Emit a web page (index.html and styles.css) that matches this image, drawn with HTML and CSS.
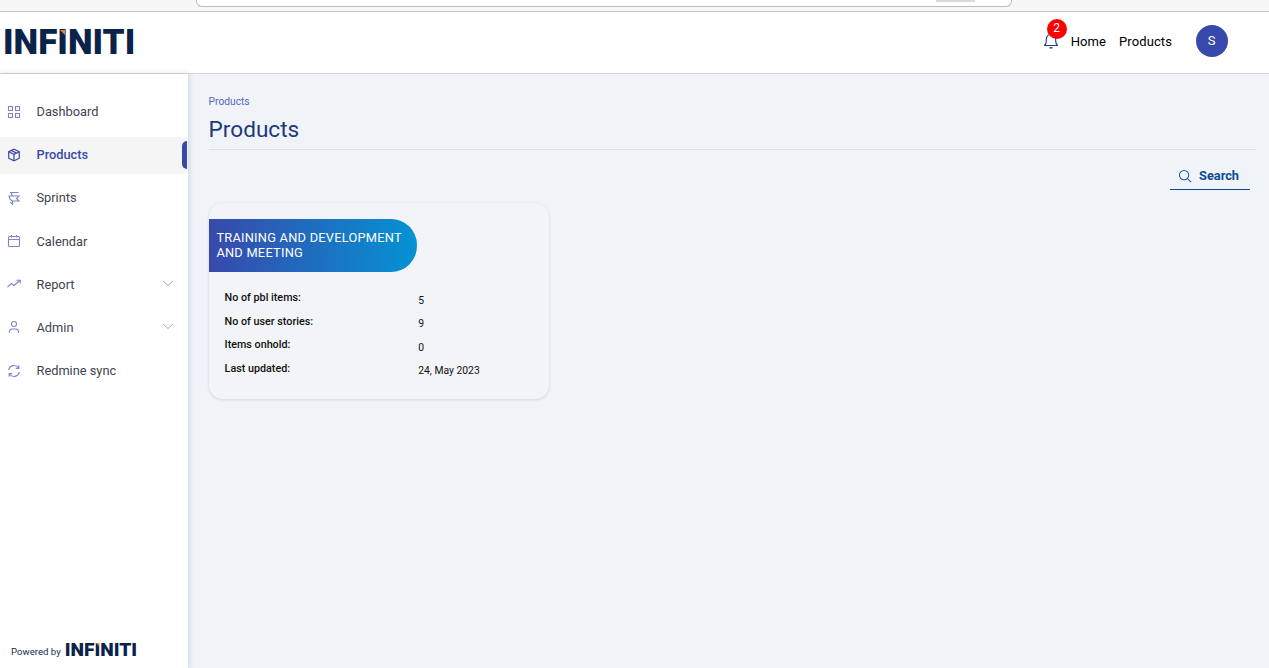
FILE: index.html
```html
<!DOCTYPE html>
<html lang="en">
<head>
<meta charset="utf-8">
<title>Products</title>
<link rel="stylesheet" href="styles.css">
</head>
<body>
<div class="chrome">
  <div class="urlbar"><span class="urlchip"></span></div>
</div>
<header class="topbar">
  <div class="logo"><span>INF</span><span class="logo-i">I</span><span>NITI</span></div>
  <nav class="topnav">
    <span class="bell">
      <svg width="14" height="16" viewBox="0 0 14 16" fill="none" stroke="#1e3a8a" stroke-width="1.1"><path d="M.5 12.500h13c-1.300-1.200-1.800-2.400-1.800-4.300V6a4.700 4.700 0 0 0-9.400 0v2.200c0 1.900-.5 3.100-1.800 4.300z"/><path d="M5.500 14.800h3" stroke-width="1.400"/></svg>
      <span class="badge">2</span>
    </span>
    <a class="toplink toplink-home">Home</a>
    <a class="toplink toplink-products">Products</a>
    <span class="avatar">S</span>
  </nav>
</header>
<div class="shell">
  <aside class="sidebar">
    <ul class="menu">
      <li class="item">
        <svg class="ico" viewBox="0 0 14 14" fill="none" stroke="#7f86c6" stroke-width="1.100"><rect x="1.500" y="1.500" width="4" height="4"/><rect x="8.500" y="1.500" width="4" height="4"/><rect x="1.500" y="8.500" width="4" height="4"/><rect x="8.500" y="8.500" width="4" height="4"/></svg>
        <span>Dashboard</span>
      </li>
      <li class="item active">
        <svg class="ico" viewBox="0 0 14 14" fill="none" stroke="#3949ab" stroke-width="1.200"><path d="M7 1.200l5.300 2.500v6.500L7 12.800l-5.300-2.600V3.700z"/><path d="M1.700 3.700L7 6.400l5.300-2.700M7 6.400v6.400M4.300 2.500l5.400 2.600"/></svg>
        <span>Products</span>
      </li>
      <li class="item">
        <svg class="ico" viewBox="0 0 14 14" fill="none" stroke="#7f86c6" stroke-width="1.100"><path d="M3 1.500h8.500M4 1.500l1.500 3.500H12L9.500 7.500l2.500 2.500H5L3 8 2 5h3.500M5.500 10v3.300L3 10.800"/></svg>
        <span>Sprints</span>
      </li>
      <li class="item">
        <svg class="ico" viewBox="0 0 14 14" fill="none" stroke="#7f86c6" stroke-width="1.100"><rect x="1.500" y="2.500" width="11" height="10" rx="1"/><path d="M1.500 5.500h11M4.500 1v2.500M9.500 1v2.500"/></svg>
        <span>Calendar</span>
      </li>
      <li class="item">
        <svg class="ico" viewBox="0 0 14 14" fill="none" stroke="#7f86c6" stroke-width="1.100"><path d="M0.500 10l4-3.500 2.500 2L13 3.500M9.500 3.200H13.200V6.500"/></svg>
        <span>Report</span>
        <svg class="chev" viewBox="0 0 12 7" fill="none" stroke="#a9adb8"><path d="M1 1l5 4.500L11 1"/></svg>
      </li>
      <li class="item">
        <svg class="ico" viewBox="0 0 14 14" fill="none" stroke="#7f86c6" stroke-width="1.100"><circle cx="7" cy="4" r="2.500"/><path d="M2.500 13v-1.500c0-1.500 1.300-2.500 2.500-2.500h4c1.200 0 2.500 1 2.500 2.500V13"/></svg>
        <span>Admin</span>
        <svg class="chev" viewBox="0 0 12 7" fill="none" stroke="#a9adb8"><path d="M1 1l5 4.500L11 1"/></svg>
      </li>
      <li class="item">
        <svg class="ico" viewBox="0 0 14 14" fill="none" stroke="#7f86c6" stroke-width="1.200"><path d="M1.800 6A5.300 5.300 0 0 1 11.500 4M12.200 8a5.300 5.300 0 0 1-9.700 2"/><path d="M11.800 1.200V4.300H8.700M2.200 12.800V9.700h3.100"/></svg>
        <span>Redmine sync</span>
      </li>
    </ul>
    <div class="powered">
      <span class="powered-text">Powered by</span>
      <span class="logo logo-small"><span>INF</span><span class="logo-i">I</span><span>NITI</span></span>
    </div>
  </aside>
  <main class="content">
    <div class="crumb">Products</div>
    <h1 class="title">Products</h1>
    <div class="toolbar">
      <div class="search">
        <svg width="14" height="14" viewBox="0 0 15 15" fill="none" stroke="#1e5aa0" stroke-width="1.100"><circle cx="6.500" cy="6.500" r="5"/><path d="M10.200 10.200L14 14"/></svg>
        <span>Search</span>
      </div>
    </div>
    <article class="card">
      <div class="pill">TRAINING AND DEVELOPMENT AND MEETING</div>
      <dl class="stats">
        <dt>No of pbl items:</dt><dd>5</dd>
        <dt>No of user stories:</dt><dd>9</dd>
        <dt>Items onhold:</dt><dd>0</dd>
        <dt>Last updated:</dt><dd>24, May 2023</dd>
      </dl>
    </article>
  </main>
</div>
</body>
</html>
```
FILE: styles.css
```css
* { box-sizing: border-box; }
html, body { margin: 0; height: 100%; overflow: hidden; }
body { font-family: Roboto, "Liberation Sans", sans-serif; background: #f0f4f9; color: #000; display: flex; flex-direction: column; height: 668px; }

.chrome { height: 12px; flex: none; background: #f7f7f7; border-bottom: 1px solid #c9c9c9; padding-left: 196px; }
.urlbar { width: 816px; height: 7px; background: #fff; border: 1px solid #bdbdbd; border-top: 0; border-radius: 0 0 6px 6px; display: flex; justify-content: flex-end; padding-right: 36px; }
.urlchip { width: 39px; height: 2px; background: #d9d9d9; }

.topbar { height: 62px; flex: none; background: #fff; border-bottom: 1px solid #d4d6da; display: flex; align-items: center; justify-content: space-between; padding-left: 3px; }
.logo { font-family: Roboto, "Liberation Sans", sans-serif; font-weight: 900; font-size: 35px; line-height: 1; color: #0b2349; display: flex; position: relative; }
.logo-i { position: relative; }
.logo-i::before { content: ""; position: absolute; left: 2.500px; top: 5px; width: 0; height: 0; border-top: 5px solid #f5822a; border-left: 5px solid transparent; }
.logo-small { font-size: 19.200px; top: -2px; }
.logo-small .logo-i::before { left: 1.500px; top: 3px; border-top-width: 3px; border-left-width: 3px; }

.topnav { display: flex; align-items: center; padding-right: 41px; position: relative; top: -2px; }
.bell { position: relative; display: flex; margin-right: 13px; }
.badge { position: absolute; left: 3px; top: -14px; width: 20px; height: 20px; border-radius: 50%; background: #f00; color: #fff; font-size: 12px; display: flex; align-items: center; justify-content: center; padding-bottom: 1px; }
.toplink { font-size: 13px; color: #000; letter-spacing: 0.1px; line-height: 16px; padding-top: 2px; }
.toplink-products { margin-left: 13px; }
.avatar { width: 32px; height: 32px; border-radius: 50%; background: #3949ab; color: #fff; font-size: 13px; display: flex; align-items: center; justify-content: center; margin-left: 24px; padding-right: 1px; }

.shell { flex: 1; display: flex; min-height: 0; }
.sidebar { width: 188px; flex: none; background: #fff; box-shadow: 1px 0 5px rgba(60, 70, 100, 0.2); display: flex; flex-direction: column; justify-content: space-between; padding-top: 19.100px; position: relative; isolation: isolate; }
.menu { list-style: none; margin: 0; padding: 0; display: flex; flex-direction: column; gap: 6px; }
.item { height: 37.150px; display: flex; align-items: center; padding: 0 14px 0 7px; font-size: 12.800px; color: #3e4450; position: relative; }
.item span { margin-left: 15.500px; flex: 1; }
.ico { width: 14px; height: 14px; flex: none; }
.chev { width: 12px; height: 7px; flex: none; position: relative; top: -1px; }
.active { color: #3949ab; font-weight: 500; }
.active::before { content: ""; position: absolute; left: 0; right: 0; top: 1px; bottom: -1px; z-index: -1; background: #f5f5f5; border-radius: 0 0 6px 0; }
.active::after { content: ""; position: absolute; right: 1px; top: 5px; width: 5px; height: 28px; background: #3949ab; border-radius: 5px 0 0 5px; }

.powered { display: flex; align-items: center; padding: 0 0 7px 11px; }
.powered-text { font-size: 9.600px; color: #1a2c4f; margin-right: 4px; position: relative; }

.content { flex: 1; padding: 22px 13px 0 20.600px; min-width: 0; }
.crumb { font-size: 10.240px; line-height: 12px; color: #5468bb; }
.title { margin: 7px 0 0; font-size: 22.600px; font-weight: 400; line-height: 29px; color: #1e3a78; padding-bottom: 5px; border-bottom: 1px solid #dcdfe4; }
.toolbar { display: flex; justify-content: flex-end; padding: 19px 6px 0 0; }
.search { width: 80px; height: 21px; border-bottom: 1px solid #0e4a94; display: flex; align-items: flex-start; padding-left: 8px; gap: 7px; color: #0e4a94; font-size: 12.800px; font-weight: 700; line-height: 14px; }
.card { width: 340px; height: 196px; margin-top: 13px; background: #f2f4f7; border-radius: 14px; box-shadow: 0 1px 3px rgba(60, 70, 100, 0.18); padding-top: 16px; }
.pill { width: 208px; height: 53px; padding: 11px 8px 0 7.800px; font-size: 12.800px; line-height: 15px; letter-spacing: 0.25px; color: #fff; background: linear-gradient(90deg, #3949ab, #0592d4); border-radius: 0 26px 26px 0; }
.stats { margin: 18px 0 0 16px; display: grid; grid-template-columns: 193.600px 1fr; grid-auto-rows: 23.500px; font-size: 10.750px; line-height: 16px; }
.stats dt { font-weight: 500; color: #111; }
.stats dd { margin: 2.500px 0 0; color: #111; font-size: 10.350px; }
```
